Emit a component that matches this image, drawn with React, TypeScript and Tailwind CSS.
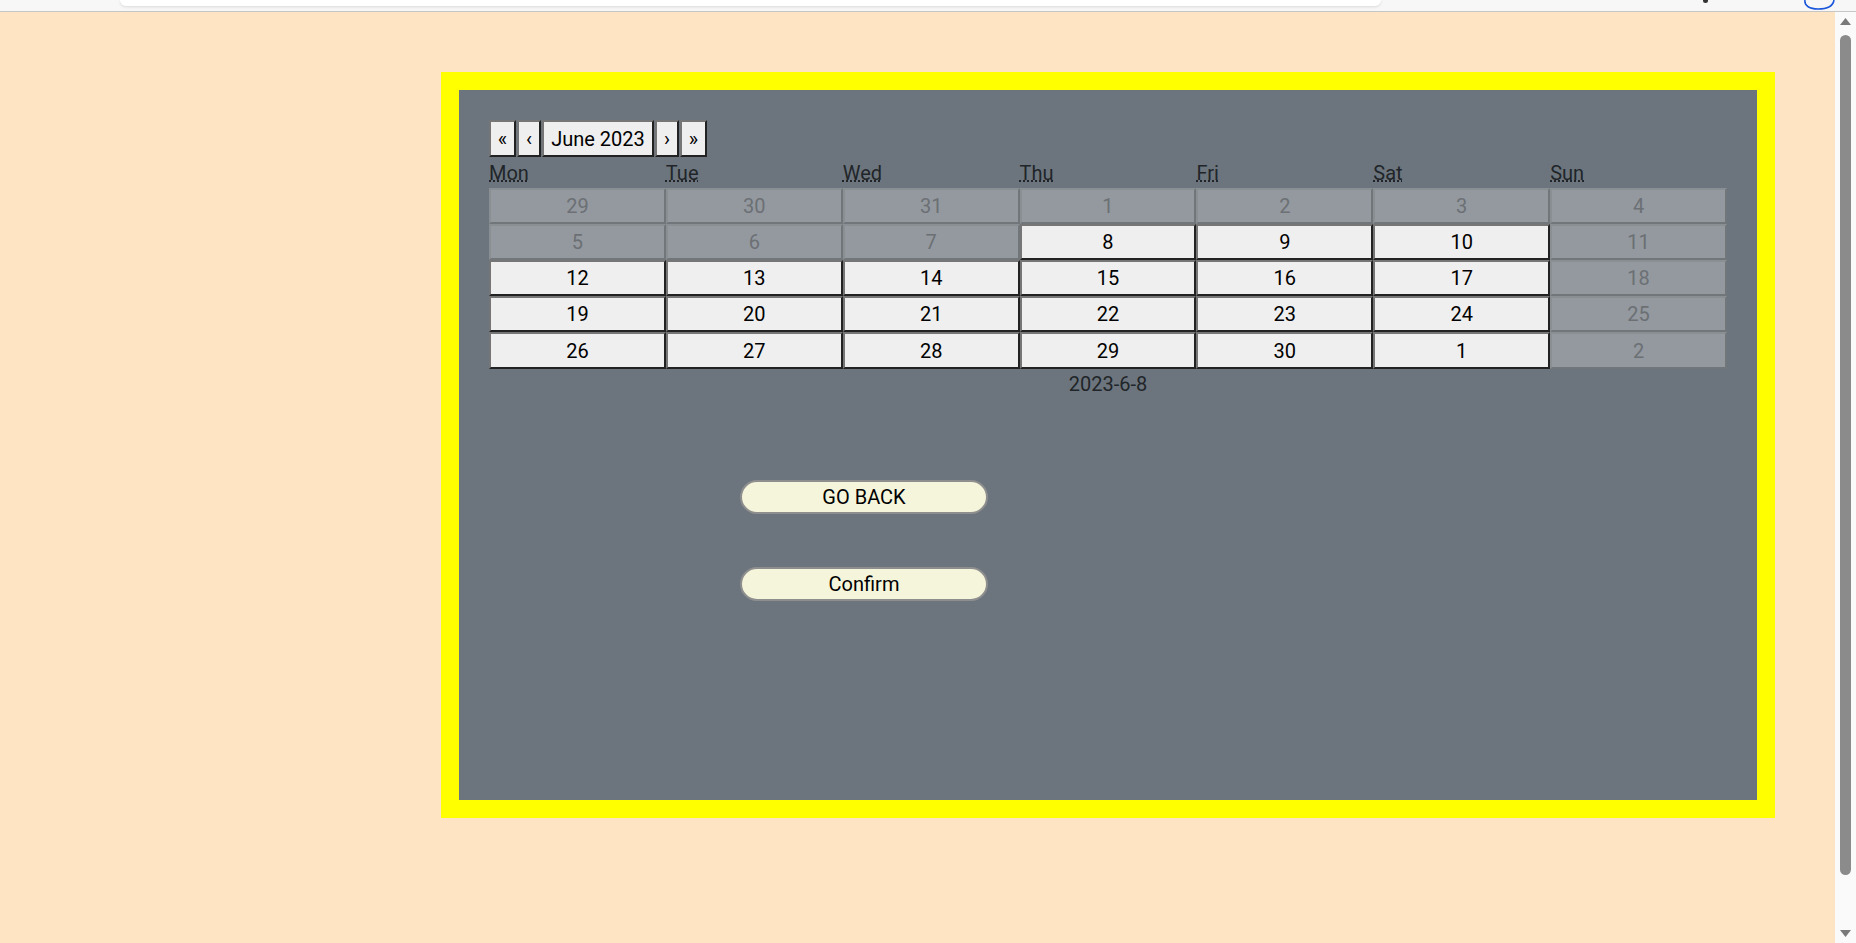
import React from 'react';

type Day = { n: number; off: boolean };

const rows: Day[][] = [
  [29, 30, 31, 1, 2, 3, 4].map((n) => ({ n, off: true })),
  [5, 6, 7, 8, 9, 10, 11].map((n, i) => ({ n, off: i < 3 || i === 6 })),
  [12, 13, 14, 15, 16, 17, 18].map((n, i) => ({ n, off: i === 6 })),
  [19, 20, 21, 22, 23, 24, 25].map((n, i) => ({ n, off: i === 6 })),
  [26, 27, 28, 29, 30, 1, 2].map((n, i) => ({ n, off: i === 6 })),
];

const weekdays = [
  ['Mon', 'Monday'],
  ['Tue', 'Tuesday'],
  ['Wed', 'Wednesday'],
  ['Thu', 'Thursday'],
  ['Fri', 'Friday'],
  ['Sat', 'Saturday'],
  ['Sun', 'Sunday'],
];

const onTile =
  'bg-[#efefef] text-black border-2 border-t-[#767676] border-l-[#767676] border-r-[#222] border-b-[#222]';
const offTile =
  'bg-[#93999f] text-[#6c7074] border-2 border-t-[#8a8f93] border-l-[#8a8f93] border-r-[#71767a] border-b-[#71767a]';

const NavBtn = ({ label, w }: { label: string; w: string }) => (
  <button className={`${onTile} ${w} h-[37px] flex items-center justify-center leading-none`}>
    {label}
  </button>
);

const App = () => {
  return (
    <div className="h-screen w-full overflow-hidden flex flex-col font-['Roboto',sans-serif] text-[20px]">
      {/* browser strip */}
      <div className="h-[12px] shrink-0 bg-[#f7f7f7] border-b border-[#c6c6c6] flex items-start relative">
        <div className="ml-[120px] w-[1261px] h-[6px] bg-white rounded-b-[14px] shadow-[0_1px_3px_rgba(0,0,0,0.12)]" />
        <div className="ml-[322px] w-[5px] h-[3px] bg-[#333] rounded-b-sm" />
        <svg className="ml-[94px]" width="34" height="10" viewBox="0 0 34 10">
          <path d="M3 0 C2 6 8 9 16 9 C26 9 31 6 32 0" fill="none" stroke="#1a56db" strokeWidth="1.6" />
        </svg>
      </div>

      <div className="flex-1 flex min-h-0">
        <main className="flex-1 bg-[#ffe4c4] pt-[60px] pl-[441px]">
          <div className="w-[1334px] h-[746px] border-[18px] border-[#ffff00] bg-[#6c757d] p-[30px]">
            {/* calendar */}
            <div className="w-full">
              <div className="flex gap-px">
                <NavBtn label="«" w="w-[27px]" />
                <NavBtn label="‹" w="w-[24px]" />
                <NavBtn label="June 2023" w="w-[112px]" />
                <NavBtn label="›" w="w-[24px]" />
                <NavBtn label="»" w="w-[27px]" />
              </div>
              <div className="grid grid-cols-7 h-[30.7px] items-end leading-[1.5] text-[#212529]">
                {weekdays.map(([s, t]) => (
                  <div key={s}>
                    <abbr title={t}>{s}</abbr>
                  </div>
                ))}
              </div>
              <div className="grid grid-cols-7">
                {rows.flat().map((d, i) => (
                  <button
                    key={i}
                    disabled={d.off}
                    className={`${d.off ? offTile : onTile} h-[36.2px] flex items-center justify-center`}
                  >
                    {d.n}
                  </button>
                ))}
              </div>
              <div className="text-center leading-[1.5] text-[#212529]">2023-6-8</div>
            </div>

            {/* actions */}
            <div className="ml-[251px] mt-[81px] flex flex-col gap-[53px]">
              <button className="w-[248px] h-[34px] rounded-full bg-[#f5f5dc] border-2 border-[#8e8e8e] text-black flex items-center justify-center">
                GO BACK
              </button>
              <button className="w-[248px] h-[34px] rounded-full bg-[#f5f5dc] border-2 border-[#8e8e8e] text-black flex items-center justify-center">
                Confirm
              </button>
            </div>
          </div>
        </main>

        {/* scrollbar */}
        <div className="w-[21px] shrink-0 bg-[#fafafa] flex flex-col items-center pt-[6px] pb-[6px]">
          <svg width="11" height="7" viewBox="0 0 11 7">
            <path d="M5.5 0 L11 7 L0 7 Z" fill="#7a7a7a" />
          </svg>
          <div className="w-[11px] flex-1 mt-[10px] mb-[55px] rounded-full bg-[#8b8b8b]" />
          <svg width="11" height="7" viewBox="0 0 11 7">
            <path d="M0 0 L11 0 L5.5 7 Z" fill="#7a7a7a" />
          </svg>
        </div>
      </div>
    </div>
  );
};

export default App;
